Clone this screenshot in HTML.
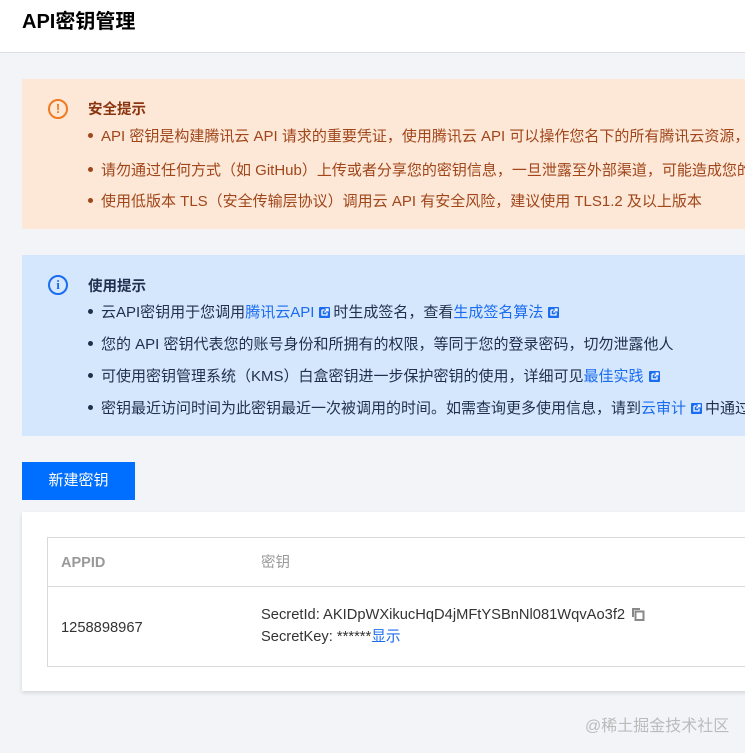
<!DOCTYPE html>
<html><head><meta charset="utf-8"><style>
*{margin:0;padding:0;box-sizing:border-box}
body{width:745px;height:753px;overflow:hidden;background:#f2f4f8;font-family:"Liberation Sans","Noto Sans CJK SC",sans-serif;position:relative;font-size:14px}
.hdr{position:absolute;left:0;top:0;width:745px;height:53px;background:#fff;border-bottom:1px solid #dcdee3}
.hdr h1{position:absolute;left:22px;top:8px;font-size:20px;font-weight:bold;color:#000;line-height:28px}
.box{position:absolute;left:22px;width:740px}
.or{top:79px;height:150px;background:#fde7d7;color:#a0461a}
.bl{top:255px;height:181px;background:#d5e7fd;color:#1f2f4d}
.ic{position:absolute;left:26px;width:20px;height:20px;border-radius:50%;border:2px solid;font-weight:bold;font-size:13px;text-align:center;line-height:16px}
.or .ic{top:20px;border-color:#f07a20;color:#f07a20}
.bl .ic{top:20px;border-color:#1a6cf0;color:#1a6cf0;font-family:"Liberation Serif",serif}
.tt{position:absolute;left:66px;font-weight:bold;font-size:14.5px;line-height:20px}
.or .tt{color:#8a3510}
.li{position:absolute;left:66px;white-space:nowrap;line-height:20px;font-size:15px}
.li i{display:inline-block;width:5px;height:5px;border-radius:50%;background:currentColor;margin-right:8px;vertical-align:middle;position:relative;top:-2px}
a{color:#1a6cf0;text-decoration:none}
.ext{display:inline-block;width:11px;height:11px;margin:0 3px 0 5px;vertical-align:-1px}
.btn{position:absolute;left:22px;top:462px;width:113px;height:38px;background:#006eff;color:#fff;font-size:15px;text-align:center;line-height:38px}
.panel{position:absolute;left:22px;top:512px;width:740px;height:179px;background:#fff;box-shadow:0 2px 4px rgba(0,0,0,.12)}
.tbl{position:absolute;left:25px;top:25px;width:720px;height:130px;border:1px solid #d9d9d9}
.th{position:absolute;top:0;height:49px;width:100%;border-bottom:1px solid #d9d9d9}
.g{position:absolute;color:#999;font-size:14.5px;line-height:20px}
.d{position:absolute;color:#333;font-size:14.7px;line-height:20px;white-space:nowrap}
.wm{position:absolute;left:585px;top:712px;color:#bbb;font-size:16px}
</style></head><body>
<svg width="0" height="0" style="position:absolute"><defs><symbol id="e" viewBox="0 0 11 11"><rect width="11" height="11" rx="1" fill="#1a6cf0"/><path d="M3 3h2.5M3 3v5h5V5.5M5.5 5.5L9 2M6.5 2H9v2.5" stroke="#fff" stroke-width="1.3" fill="none"/></symbol></defs></svg>
<div class="hdr"><h1>API密钥管理</h1></div>
<div class="box or">
<div class="ic">!</div>
<div class="tt" style="top:21px">安全提示</div>
<div class="li" style="top:48px"><i></i>API 密钥是构建腾讯云 API 请求的重要凭证，使用腾讯云 API 可以操作您名下的所有腾讯云资源，</div>
<div class="li" style="top:82px"><i></i>请勿通过任何方式（如 GitHub）上传或者分享您的密钥信息，一旦泄露至外部渠道，可能造成您的</div>
<div class="li" style="top:113px"><i></i>使用低版本 TLS（安全传输层协议）调用云 API 有安全风险，建议使用 TLS1.2 及以上版本</div>
</div>
<div class="box bl">
<div class="ic">i</div>
<div class="tt" style="top:22px">使用提示</div>
<div class="li" style="top:48px"><i></i>云API密钥用于您调用<a>腾讯云API</a><svg class="ext"><use href="#e"/></svg>时生成签名，查看<a>生成签名算法</a><svg class="ext"><use href="#e"/></svg></div>
<div class="li" style="top:80px"><i></i>您的 API 密钥代表您的账号身份和所拥有的权限，等同于您的登录密码，切勿泄露他人</div>
<div class="li" style="top:112px"><i></i>可使用密钥管理系统（KMS）白盒密钥进一步保护密钥的使用，详细可见<a>最佳实践</a><svg class="ext"><use href="#e"/></svg></div>
<div class="li" style="top:144px"><i></i>密钥最近访问时间为此密钥最近一次被调用的时间。如需查询更多使用信息，请到<a>云审计</a><svg class="ext"><use href="#e"/></svg>中通过</div>
</div>
<div class="btn">新建密钥</div>
<div class="panel"><div class="tbl">
<div class="th"><div class="g" style="left:13px;top:15px;font-weight:bold">APPID</div><div class="g" style="left:213px;top:15px">密钥</div></div>
<div class="d" style="left:13px;top:80px">1258898967</div>
<div class="d" style="left:213px;top:67px">SecretId: AKIDpWXikucHqD4jMFtYSBnNl081WqvAo3f2 <svg width="14" height="14" viewBox="0 0 14 14" style="vertical-align:-2px;margin-left:2px"><path d="M1 1h8v2H3v7H1z" fill="#888"/><rect x="4.5" y="4.5" width="8" height="8.5" fill="none" stroke="#888" stroke-width="2"/></svg></div>
<div class="d" style="left:213px;top:89px">SecretKey: ******<a>显示</a></div>
</div></div>
<div class="wm">@稀土掘金技术社区</div>
</body></html>
